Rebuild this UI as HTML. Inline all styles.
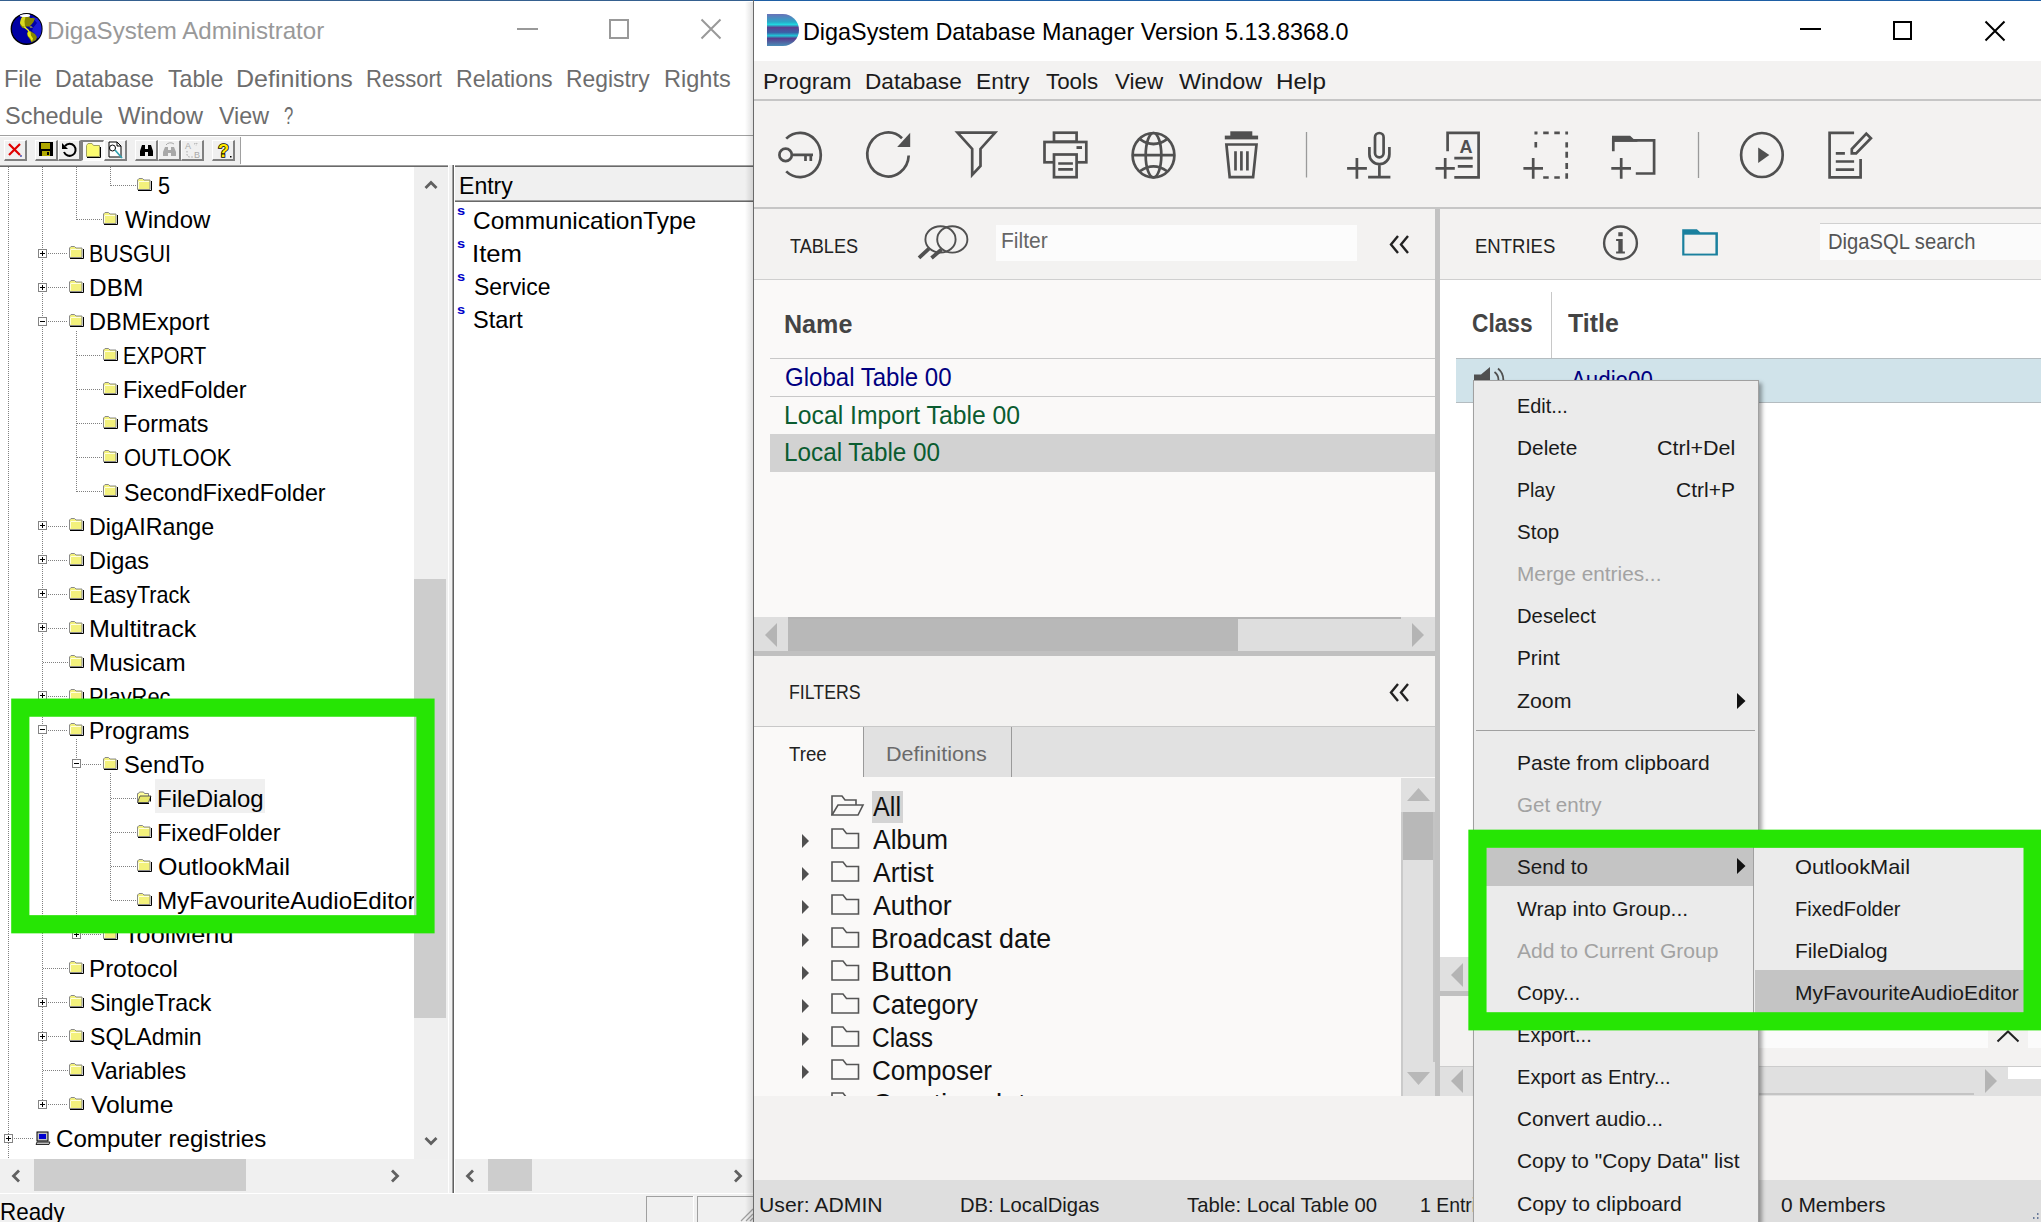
<!DOCTYPE html><html><head><meta charset="utf-8"><title>DigaSystem</title><style>
html,body{margin:0;padding:0;background:#fff;}
body{width:2041px;height:1222px;position:relative;overflow:hidden;font-family:"Liberation Sans",sans-serif;}
div,span.t,svg{position:absolute;}
span.t{white-space:nowrap;transform-origin:0 50%;}
.vd{width:1px;background-image:linear-gradient(to bottom,#808080 50%,transparent 50%);background-size:1px 2px;}
.hd{height:1px;background-image:linear-gradient(to right,#808080 50%,transparent 50%);background-size:2px 1px;}
</style></head><body>
<div style="left:0px;top:0px;width:754px;height:1222px;background:#fff;"></div>
<div style="left:0px;top:0px;width:754px;height:1px;background:#35608f;"></div>
<svg style="left:10px;top:12px;" width="34" height="34" viewBox="10 12 34 34"><defs><clipPath id="gc"><circle cx="26.6" cy="28.9" r="15"/></clipPath></defs><circle cx="26.6" cy="28.9" r="15.3" fill="#0000a4" stroke="#000" stroke-width="1.4"/><g clip-path="url(#gc)"><path d="M32 17l6 1 5 8v12l-4 2-4-6-3-3 1-3 4-5z" fill="#1a1ad8"/><path d="M22.500 16.600L29 16.200l1 1.800h3l2 .5-1.500 3.500-2 2.500-2 2h-3.500v2l-3.500-.5-2-2.500-.5-2.500 1-3.500z" fill="#868600"/><path d="M20 23l1-4.500 2-2.200 2.500.5-1 4.500.5 5-2.500.200-2-2.500z" fill="#d8d820"/><path d="M23.500 27l1.200-.8 4.800 4.300-1.200.8z" fill="#e8e820"/><path d="M28 31l3 .5 4 2.500 2 3-1 3-3 1.500-1.500 1-1.500-3-2.500-3.500-.5-2.500z" fill="#868600"/><path d="M27.500 33.500l.8-2.500 2.200.5.500 4 2 3-1 3-2-3.500-2-2z" fill="#e6e61c"/><path d="M29.500 26.500l2 0 1.500 1h-3z" fill="#e0e020"/><ellipse cx="25" cy="15.400" rx="5.200" ry="1.700" fill="#fff"/></g></svg>
<span class="t" style="left:47.1px;top:19.6px;font-size:23.6px;line-height:23.6px;color:#999;transform:scaleX(1.0213);">DigaSystem Administrator</span>
<div style="left:517px;top:28px;width:21px;height:2px;background:#999;"></div>
<div style="left:609px;top:19px;width:20px;height:20px;border:2px solid #999;box-sizing:border-box;"></div>
<svg style="left:700px;top:18px;" width="22" height="22" viewBox="0 0 22 22"><path d="M1.5 1.5l19 19M20.5 1.5l-19 19" stroke="#999" stroke-width="2" fill="none"/></svg>
<span class="t" style="left:4.1px;top:67.6px;font-size:23.6px;line-height:23.6px;color:#6d6d6d;transform:scaleX(0.9953);">File</span>
<span class="t" style="left:55.2px;top:67.6px;font-size:23.6px;line-height:23.6px;color:#6d6d6d;transform:scaleX(0.9778);">Database</span>
<span class="t" style="left:167.5px;top:67.6px;font-size:23.6px;line-height:23.6px;color:#6d6d6d;transform:scaleX(0.9820);">Table</span>
<span class="t" style="left:236.0px;top:67.6px;font-size:23.6px;line-height:23.6px;color:#6d6d6d;transform:scaleX(1.0605);">Definitions</span>
<span class="t" style="left:366.2px;top:67.6px;font-size:23.6px;line-height:23.6px;color:#6d6d6d;transform:scaleX(0.9332);">Ressort</span>
<span class="t" style="left:456.1px;top:67.6px;font-size:23.6px;line-height:23.6px;color:#6d6d6d;transform:scaleX(0.9823);">Relations</span>
<span class="t" style="left:566.2px;top:67.6px;font-size:23.6px;line-height:23.6px;color:#6d6d6d;transform:scaleX(0.9678);">Registry</span>
<span class="t" style="left:664.1px;top:67.6px;font-size:23.6px;line-height:23.6px;color:#6d6d6d;transform:scaleX(0.9970);">Rights</span>
<span class="t" style="left:4.9px;top:105.1px;font-size:23.6px;line-height:23.6px;color:#6d6d6d;transform:scaleX(0.9958);">Schedule</span>
<span class="t" style="left:117.9px;top:105.1px;font-size:23.6px;line-height:23.6px;color:#6d6d6d;transform:scaleX(1.0131);">Window</span>
<span class="t" style="left:218.9px;top:105.1px;font-size:23.6px;line-height:23.6px;color:#6d6d6d;transform:scaleX(0.9877);">View</span>
<span class="t" style="left:284.3px;top:105.1px;font-size:23.6px;line-height:23.6px;color:#6d6d6d;transform:scaleX(0.7062);">?</span>
<div style="left:0px;top:135px;width:754px;height:1px;background:#a0a0a0;"></div>
<div style="left:0px;top:136px;width:754px;height:29px;background:#fff;"></div>
<div style="left:0px;top:137px;width:241px;height:28px;background:#f0f0f0;"></div>
<div style="left:4px;top:140px;width:23px;height:21px;background:#f0f0f0;box-sizing:border-box;border-right:2px solid #808080;border-bottom:2px solid #808080;border-left:1px solid #fff;border-top:1px solid #fff;"></div>
<div style="left:35px;top:140px;width:23px;height:21px;background:#f0f0f0;box-sizing:border-box;border-right:2px solid #808080;border-bottom:2px solid #808080;border-left:1px solid #fff;border-top:1px solid #fff;"></div>
<div style="left:58px;top:140px;width:23px;height:21px;background:#f0f0f0;box-sizing:border-box;border-right:2px solid #808080;border-bottom:2px solid #808080;border-left:1px solid #fff;border-top:1px solid #fff;"></div>
<div style="left:81px;top:140px;width:23px;height:21px;background:#f8f8f8;box-sizing:border-box;border-left:2px solid #808080;border-top:2px solid #808080;border-right:1px solid #fff;border-bottom:1px solid #fff;"></div>
<div style="left:104px;top:140px;width:23px;height:21px;background:#f0f0f0;box-sizing:border-box;border-right:2px solid #808080;border-bottom:2px solid #808080;border-left:1px solid #fff;border-top:1px solid #fff;"></div>
<div style="left:135px;top:140px;width:23px;height:21px;background:#f0f0f0;box-sizing:border-box;border-right:2px solid #808080;border-bottom:2px solid #808080;border-left:1px solid #fff;border-top:1px solid #fff;"></div>
<div style="left:158px;top:140px;width:23px;height:21px;background:#f0f0f0;box-sizing:border-box;border-right:2px solid #808080;border-bottom:2px solid #808080;border-left:1px solid #fff;border-top:1px solid #fff;"></div>
<div style="left:181px;top:140px;width:23px;height:21px;background:#f0f0f0;box-sizing:border-box;border-right:2px solid #808080;border-bottom:2px solid #808080;border-left:1px solid #fff;border-top:1px solid #fff;"></div>
<div style="left:212px;top:140px;width:23px;height:21px;background:#f0f0f0;box-sizing:border-box;border-right:2px solid #808080;border-bottom:2px solid #808080;border-left:1px solid #fff;border-top:1px solid #fff;"></div>
<svg style="left:4px;top:139px;" width="23" height="22" viewBox="0 0 23 22"><path d="M5 5l11 11M16 5l-11 11" stroke="#e00000" stroke-width="2.2" fill="none"/><path d="M16.5 16.5l1 1" stroke="#00008b" stroke-width="1.5"/></svg>
<svg style="left:35px;top:139px;" width="23" height="22" viewBox="0 0 23 22"><rect x="4" y="3" width="14" height="14" fill="#000"/><rect x="6" y="4" width="9" height="6" fill="#b0a800"/><rect x="7" y="12" width="8" height="5" fill="#b0a800"/><rect x="12" y="13" width="2" height="3" fill="#000"/></svg>
<svg style="left:58px;top:139px;" width="23" height="22" viewBox="0 0 23 22"><path d="M7 7a6 6 0 1 1-1 6" stroke="#000" stroke-width="2" fill="none"/><path d="M4 4v6h6z" fill="#000"/></svg>
<svg style="left:81px;top:139px;" width="23" height="22" viewBox="0 0 23 22"><path d="M5.5 17.5V6.500l1.500-2h4l1.500 2h6v11z" fill="#fbfb70" stroke="#a0a060"/><path d="M6 18.500h13.500V8" stroke="#000" fill="none"/></svg>
<svg style="left:104px;top:139px;" width="23" height="22" viewBox="0 0 23 22"><path d="M5 3h8l4 4v11H5z" fill="#fff" stroke="#000"/><path d="M13 3v4h4" fill="none" stroke="#000"/><circle cx="8.5" cy="9" r="3" fill="none" stroke="#000"/><path d="M11 11l7 8" stroke="#30a0b0" stroke-width="1.6"/></svg>
<svg style="left:135px;top:139px;" width="23" height="22" viewBox="0 0 23 22"><path d="M5 17v-5l2-6h3v4h3V6h3l2 6v5h-5v-4h-3v4z" fill="#000"/></svg>
<svg style="left:158px;top:139px;" width="23" height="22" viewBox="0 0 23 22"><path d="M5 17v-4l2-5h3v3h3V8h3l2 5v4h-5v-3h-3v3z" fill="#a8a8a8"/><path d="M8 6a5 4 0 0 1 8-1" stroke="#a8a8a8" fill="none"/></svg>
<svg style="left:181px;top:139px;" width="23" height="22" viewBox="0 0 23 22"><text x="4" y="10" font-size="9" fill="#a8a8a8" font-family="Liberation Sans,sans-serif">A</text><text x="13" y="19" font-size="9" fill="#a8a8a8" font-family="Liberation Sans,sans-serif">B</text><path d="M6 12v3q0 3 3 3h3M13 5l3-1-1 3" stroke="#a8a8a8" stroke-dasharray="1.5 1.5" fill="none"/></svg>
<svg style="left:212px;top:139px;" width="23" height="22" viewBox="0 0 23 22"><text x="6" y="18" font-size="18" font-weight="bold" fill="#ffe800" stroke="#000" stroke-width="1.6" paint-order="stroke" font-family="Liberation Sans,sans-serif">?</text><rect x="18" y="17" width="1.5" height="1.5" fill="#000"/></svg>
<div style="left:240px;top:137px;width:1px;height:27px;background:#a0a0a0;"></div>
<div style="left:241px;top:137px;width:1px;height:27px;background:#fff;"></div>
<div style="left:0px;top:165px;width:448px;height:1px;background:#a0a0a0;"></div>
<div style="left:0px;top:166px;width:448px;height:1px;background:#696969;"></div>
<div style="left:414px;top:167px;width:34px;height:992px;background:#efefef;"></div>
<div style="left:414px;top:579px;width:32px;height:439px;background:#cdcdcd;"></div>
<svg style="left:424px;top:180px;" width="14" height="10" viewBox="0 0 14 10"><path d="M1.500 8L7 2.500 12.500 8" stroke="#606060" stroke-width="2.800" fill="none"/></svg>
<svg style="left:424px;top:1136px;" width="14" height="10" viewBox="0 0 14 10"><path d="M1.500 2L7 7.500 12.500 2" stroke="#606060" stroke-width="2.800" fill="none"/></svg>
<div style="left:0px;top:1159px;width:448px;height:34px;background:#f0f0f0;"></div>
<div style="left:34px;top:1159px;width:212px;height:32px;background:#cdcdcd;"></div>
<svg style="left:11px;top:1169px;" width="10" height="14" viewBox="0 0 10 14"><path d="M8 1.500L2.500 7 8 12.500" stroke="#606060" stroke-width="2.800" fill="none"/></svg>
<svg style="left:390px;top:1169px;" width="10" height="14" viewBox="0 0 10 14"><path d="M2 1.500L7.500 7 2 12.500" stroke="#606060" stroke-width="2.800" fill="none"/></svg>
<div style="left:448px;top:165px;width:1px;height:1028px;background:#fff;"></div>
<div style="left:449px;top:165px;width:3px;height:1028px;background:#f0f0f0;"></div>
<div style="left:452px;top:165px;width:1px;height:1028px;background:#a0a0a0;"></div>
<div style="left:453px;top:165px;width:1px;height:1028px;background:#606060;"></div>
<div style="left:454px;top:167px;width:1px;height:1026px;background:#fff;"></div>
<div style="left:455px;top:165px;width:299px;height:1px;background:#a0a0a0;"></div>
<div style="left:455px;top:166px;width:299px;height:1px;background:#696969;"></div>
<div style="left:455px;top:167px;width:299px;height:34px;background:#f0f0f0;"></div>
<div style="left:455px;top:200px;width:299px;height:1px;background:#a0a0a0;"></div>
<div style="left:455px;top:201px;width:299px;height:1px;background:#696969;"></div>
<span class="t" style="left:459.2px;top:175.1px;font-size:23.6px;line-height:23.6px;color:#000;transform:scaleX(0.9771);">Entry</span>
<span class="t" style="left:473.3px;top:209.6px;font-size:23.6px;line-height:23.6px;color:#000;transform:scaleX(1.0376);">CommunicationType</span>
<span class="t" style="left:457.0px;top:205.4px;font-size:12px;line-height:12px;color:#0000c8;transform:scaleX(1.2153);font-weight:bold;">s</span>
<span class="t" style="left:472.2px;top:242.6px;font-size:23.6px;line-height:23.6px;color:#000;transform:scaleX(1.0889);">Item</span>
<span class="t" style="left:457.0px;top:238.4px;font-size:12px;line-height:12px;color:#0000c8;transform:scaleX(1.2153);font-weight:bold;">s</span>
<span class="t" style="left:473.5px;top:275.6px;font-size:23.6px;line-height:23.6px;color:#000;transform:scaleX(0.9713);">Service</span>
<span class="t" style="left:457.0px;top:271.4px;font-size:12px;line-height:12px;color:#0000c8;transform:scaleX(1.2153);font-weight:bold;">s</span>
<span class="t" style="left:473.4px;top:308.6px;font-size:23.6px;line-height:23.6px;color:#000;transform:scaleX(0.9976);">Start</span>
<span class="t" style="left:457.0px;top:304.4px;font-size:12px;line-height:12px;color:#0000c8;transform:scaleX(1.2153);font-weight:bold;">s</span>
<div style="left:455px;top:1159px;width:299px;height:34px;background:#f0f0f0;"></div>
<div style="left:488px;top:1159px;width:44px;height:32px;background:#cdcdcd;"></div>
<svg style="left:465px;top:1169px;" width="10" height="14" viewBox="0 0 10 14"><path d="M8 1.500L2.500 7 8 12.500" stroke="#606060" stroke-width="2.800" fill="none"/></svg>
<svg style="left:733px;top:1169px;" width="10" height="14" viewBox="0 0 10 14"><path d="M2 1.500L7.500 7 2 12.500" stroke="#606060" stroke-width="2.800" fill="none"/></svg>
<div style="left:0px;top:1193px;width:754px;height:29px;background:#f0f0f0;"></div>
<div style="left:0px;top:1193px;width:754px;height:1px;background:#fff;"></div>
<span class="t" style="left:0.2px;top:1201.1px;font-size:23.6px;line-height:23.6px;color:#000;transform:scaleX(0.9500);">Ready</span>
<div style="left:646px;top:1196px;width:1px;height:26px;background:#a0a0a0;"></div>
<div style="left:647px;top:1196px;width:46px;height:1px;background:#a0a0a0;"></div>
<div style="left:693px;top:1196px;width:1px;height:26px;background:#fff;"></div>
<div style="left:697px;top:1196px;width:1px;height:26px;background:#a0a0a0;"></div>
<div style="left:698px;top:1196px;width:56px;height:1px;background:#a0a0a0;"></div>
<svg style="left:738px;top:1206px;" width="16" height="16" viewBox="0 0 16 16"><path d="M15 3L3 15M15 8L8 15M15 12l-3 3" stroke="#a0a0a0" stroke-width="1.2"/></svg>
<div style="left:0;top:167px;width:414px;height:992px;overflow:hidden">
<div class="vd" style="left:8px;top:0px;height:992px"></div>
<div class="vd" style="left:42px;top:0px;height:937.8499999999999px"></div>
<div class="vd" style="left:76px;top:0px;height:52.55000000000001px"></div>
<div class="vd" style="left:110px;top:0px;height:18.5px"></div>
<div class="vd" style="left:76px;top:163.7px;height:161.25px"></div>
<div class="vd" style="left:76px;top:572.3px;height:195.29999999999995px"></div>
<div class="vd" style="left:110px;top:606.3499999999999px;height:127.20000000000005px"></div>
<div class="hd" style="left:111px;top:18px;width:25px"></div>
<div class="hd" style="left:77px;top:52px;width:25px"></div>
<div class="hd" style="left:48px;top:86px;width:20px"></div>
<div class="hd" style="left:48px;top:120px;width:20px"></div>
<div class="hd" style="left:48px;top:154px;width:20px"></div>
<div class="hd" style="left:77px;top:188px;width:25px"></div>
<div class="hd" style="left:77px;top:222px;width:25px"></div>
<div class="hd" style="left:77px;top:256px;width:25px"></div>
<div class="hd" style="left:77px;top:290px;width:25px"></div>
<div class="hd" style="left:77px;top:324px;width:25px"></div>
<div class="hd" style="left:48px;top:359px;width:20px"></div>
<div class="hd" style="left:48px;top:393px;width:20px"></div>
<div class="hd" style="left:48px;top:427px;width:20px"></div>
<div class="hd" style="left:48px;top:461px;width:20px"></div>
<div class="hd" style="left:43px;top:495px;width:25px"></div>
<div class="hd" style="left:48px;top:529px;width:20px"></div>
<div class="hd" style="left:48px;top:563px;width:20px"></div>
<div class="hd" style="left:82px;top:597px;width:20px"></div>
<div class="hd" style="left:111px;top:631px;width:25px"></div>
<div class="hd" style="left:111px;top:665px;width:25px"></div>
<div class="hd" style="left:111px;top:699px;width:25px"></div>
<div class="hd" style="left:111px;top:733px;width:25px"></div>
<div class="hd" style="left:82px;top:767px;width:20px"></div>
<div class="hd" style="left:43px;top:801px;width:25px"></div>
<div class="hd" style="left:48px;top:835px;width:20px"></div>
<div class="hd" style="left:48px;top:869px;width:20px"></div>
<div class="hd" style="left:43px;top:903px;width:25px"></div>
<div class="hd" style="left:48px;top:937px;width:20px"></div>
<div class="hd" style="left:14px;top:971px;width:20px"></div>
<svg style="left:136px;top:10px;" width="17" height="15" viewBox="0 0 17 15"><path d="M1.5 12.5V3l1.5-1.5h3.5L8 3h6v9.5z" fill="#f3f17c" stroke="#8a8a8a"/><path d="M2 13.5h13.5V4" stroke="#000" fill="none"/><path d="M2.5 4.5v7M3 4.5h10" stroke="#ffffe0" fill="none"/></svg>
<span class="t" style="left:157.8px;top:8.0px;font-size:23.6px;line-height:23.6px;color:#000;transform:scaleX(0.9188);">5</span>
<svg style="left:102px;top:44px;" width="17" height="15" viewBox="0 0 17 15"><path d="M1.5 12.5V3l1.5-1.5h3.5L8 3h6v9.5z" fill="#f3f17c" stroke="#8a8a8a"/><path d="M2 13.5h13.5V4" stroke="#000" fill="none"/><path d="M2.5 4.5v7M3 4.5h10" stroke="#ffffe0" fill="none"/></svg>
<span class="t" style="left:124.6px;top:42.1px;font-size:23.6px;line-height:23.6px;color:#000;transform:scaleX(1.0167);">Window</span>
<svg style="left:68px;top:78px;" width="17" height="15" viewBox="0 0 17 15"><path d="M1.5 12.5V3l1.5-1.5h3.5L8 3h6v9.5z" fill="#f3f17c" stroke="#8a8a8a"/><path d="M2 13.5h13.5V4" stroke="#000" fill="none"/><path d="M2.5 4.5v7M3 4.5h10" stroke="#ffffe0" fill="none"/></svg>
<svg style="left:38px;top:82px;" width="9" height="9" viewBox="0 0 9 9"><rect x="0.5" y="0.5" width="8" height="8" fill="#fff" stroke="#848484"/><path d="M2 4.5h5" stroke="#000"/><path d="M4.5 2v5" stroke="#000"/></svg>
<span class="t" style="left:89.0px;top:76.1px;font-size:23.6px;line-height:23.6px;color:#000;transform:scaleX(0.9065);">BUSGUI</span>
<svg style="left:68px;top:112px;" width="17" height="15" viewBox="0 0 17 15"><path d="M1.5 12.5V3l1.5-1.5h3.5L8 3h6v9.5z" fill="#f3f17c" stroke="#8a8a8a"/><path d="M2 13.5h13.5V4" stroke="#000" fill="none"/><path d="M2.5 4.5v7M3 4.5h10" stroke="#ffffe0" fill="none"/></svg>
<svg style="left:38px;top:116px;" width="9" height="9" viewBox="0 0 9 9"><rect x="0.5" y="0.5" width="8" height="8" fill="#fff" stroke="#848484"/><path d="M2 4.5h5" stroke="#000"/><path d="M4.5 2v5" stroke="#000"/></svg>
<span class="t" style="left:88.7px;top:110.2px;font-size:23.6px;line-height:23.6px;color:#000;transform:scaleX(1.0346);">DBM</span>
<svg style="left:68px;top:146px;" width="17" height="15" viewBox="0 0 17 15"><path d="M1.5 12.5V3l1.5-1.5h3.5L8 3h6v9.5z" fill="#f3f17c" stroke="#8a8a8a"/><path d="M2 13.5h13.5V4" stroke="#000" fill="none"/><path d="M2.5 4.5v7M3 4.5h10" stroke="#ffffe0" fill="none"/></svg>
<svg style="left:38px;top:150px;" width="9" height="9" viewBox="0 0 9 9"><rect x="0.5" y="0.5" width="8" height="8" fill="#fff" stroke="#848484"/><path d="M2 4.5h5" stroke="#000"/></svg>
<span class="t" style="left:88.8px;top:144.2px;font-size:23.6px;line-height:23.6px;color:#000;transform:scaleX(0.9976);">DBMExport</span>
<svg style="left:102px;top:180px;" width="17" height="15" viewBox="0 0 17 15"><path d="M1.5 12.5V3l1.5-1.5h3.5L8 3h6v9.5z" fill="#f3f17c" stroke="#8a8a8a"/><path d="M2 13.5h13.5V4" stroke="#000" fill="none"/><path d="M2.5 4.5v7M3 4.5h10" stroke="#ffffe0" fill="none"/></svg>
<span class="t" style="left:123.1px;top:178.3px;font-size:23.6px;line-height:23.6px;color:#000;transform:scaleX(0.8623);">EXPORT</span>
<svg style="left:102px;top:214px;" width="17" height="15" viewBox="0 0 17 15"><path d="M1.5 12.5V3l1.5-1.5h3.5L8 3h6v9.5z" fill="#f3f17c" stroke="#8a8a8a"/><path d="M2 13.5h13.5V4" stroke="#000" fill="none"/><path d="M2.5 4.5v7M3 4.5h10" stroke="#ffffe0" fill="none"/></svg>
<span class="t" style="left:122.8px;top:212.3px;font-size:23.6px;line-height:23.6px;color:#000;transform:scaleX(0.9913);">FixedFolder</span>
<svg style="left:102px;top:248px;" width="17" height="15" viewBox="0 0 17 15"><path d="M1.5 12.5V3l1.5-1.5h3.5L8 3h6v9.5z" fill="#f3f17c" stroke="#8a8a8a"/><path d="M2 13.5h13.5V4" stroke="#000" fill="none"/><path d="M2.5 4.5v7M3 4.5h10" stroke="#ffffe0" fill="none"/></svg>
<span class="t" style="left:122.8px;top:246.4px;font-size:23.6px;line-height:23.6px;color:#000;transform:scaleX(0.9883);">Formats</span>
<svg style="left:102px;top:282px;" width="17" height="15" viewBox="0 0 17 15"><path d="M1.5 12.5V3l1.5-1.5h3.5L8 3h6v9.5z" fill="#f3f17c" stroke="#8a8a8a"/><path d="M2 13.5h13.5V4" stroke="#000" fill="none"/><path d="M2.5 4.5v7M3 4.5h10" stroke="#ffffe0" fill="none"/></svg>
<span class="t" style="left:123.7px;top:280.4px;font-size:23.6px;line-height:23.6px;color:#000;transform:scaleX(0.9316);">OUTLOOK</span>
<svg style="left:102px;top:316px;" width="17" height="15" viewBox="0 0 17 15"><path d="M1.5 12.5V3l1.5-1.5h3.5L8 3h6v9.5z" fill="#f3f17c" stroke="#8a8a8a"/><path d="M2 13.5h13.5V4" stroke="#000" fill="none"/><path d="M2.5 4.5v7M3 4.5h10" stroke="#ffffe0" fill="none"/></svg>
<span class="t" style="left:123.7px;top:314.5px;font-size:23.6px;line-height:23.6px;color:#000;transform:scaleX(0.9852);">SecondFixedFolder</span>
<svg style="left:68px;top:350px;" width="17" height="15" viewBox="0 0 17 15"><path d="M1.5 12.5V3l1.5-1.5h3.5L8 3h6v9.5z" fill="#f3f17c" stroke="#8a8a8a"/><path d="M2 13.5h13.5V4" stroke="#000" fill="none"/><path d="M2.5 4.5v7M3 4.5h10" stroke="#ffffe0" fill="none"/></svg>
<svg style="left:38px;top:354px;" width="9" height="9" viewBox="0 0 9 9"><rect x="0.5" y="0.5" width="8" height="8" fill="#fff" stroke="#848484"/><path d="M2 4.5h5" stroke="#000"/><path d="M4.5 2v5" stroke="#000"/></svg>
<span class="t" style="left:88.8px;top:348.5px;font-size:23.6px;line-height:23.6px;color:#000;transform:scaleX(0.9833);">DigAIRange</span>
<svg style="left:68px;top:385px;" width="17" height="15" viewBox="0 0 17 15"><path d="M1.5 12.5V3l1.5-1.5h3.5L8 3h6v9.5z" fill="#f3f17c" stroke="#8a8a8a"/><path d="M2 13.5h13.5V4" stroke="#000" fill="none"/><path d="M2.5 4.5v7M3 4.5h10" stroke="#ffffe0" fill="none"/></svg>
<svg style="left:38px;top:388px;" width="9" height="9" viewBox="0 0 9 9"><rect x="0.5" y="0.5" width="8" height="8" fill="#fff" stroke="#848484"/><path d="M2 4.5h5" stroke="#000"/><path d="M4.5 2v5" stroke="#000"/></svg>
<span class="t" style="left:88.8px;top:382.6px;font-size:23.6px;line-height:23.6px;color:#000;transform:scaleX(0.9951);">Digas</span>
<svg style="left:68px;top:419px;" width="17" height="15" viewBox="0 0 17 15"><path d="M1.5 12.5V3l1.5-1.5h3.5L8 3h6v9.5z" fill="#f3f17c" stroke="#8a8a8a"/><path d="M2 13.5h13.5V4" stroke="#000" fill="none"/><path d="M2.5 4.5v7M3 4.5h10" stroke="#ffffe0" fill="none"/></svg>
<svg style="left:38px;top:422px;" width="9" height="9" viewBox="0 0 9 9"><rect x="0.5" y="0.5" width="8" height="8" fill="#fff" stroke="#848484"/><path d="M2 4.5h5" stroke="#000"/><path d="M4.5 2v5" stroke="#000"/></svg>
<span class="t" style="left:89.0px;top:416.6px;font-size:23.6px;line-height:23.6px;color:#000;transform:scaleX(0.9137);">EasyTrack</span>
<svg style="left:68px;top:453px;" width="17" height="15" viewBox="0 0 17 15"><path d="M1.5 12.5V3l1.5-1.5h3.5L8 3h6v9.5z" fill="#f3f17c" stroke="#8a8a8a"/><path d="M2 13.5h13.5V4" stroke="#000" fill="none"/><path d="M2.5 4.5v7M3 4.5h10" stroke="#ffffe0" fill="none"/></svg>
<svg style="left:38px;top:456px;" width="9" height="9" viewBox="0 0 9 9"><rect x="0.5" y="0.5" width="8" height="8" fill="#fff" stroke="#848484"/><path d="M2 4.5h5" stroke="#000"/><path d="M4.5 2v5" stroke="#000"/></svg>
<span class="t" style="left:88.7px;top:450.7px;font-size:23.6px;line-height:23.6px;color:#000;transform:scaleX(1.0623);">Multitrack</span>
<svg style="left:68px;top:487px;" width="17" height="15" viewBox="0 0 17 15"><path d="M1.5 12.5V3l1.5-1.5h3.5L8 3h6v9.5z" fill="#f3f17c" stroke="#8a8a8a"/><path d="M2 13.5h13.5V4" stroke="#000" fill="none"/><path d="M2.5 4.5v7M3 4.5h10" stroke="#ffffe0" fill="none"/></svg>
<span class="t" style="left:88.8px;top:484.7px;font-size:23.6px;line-height:23.6px;color:#000;transform:scaleX(1.0242);">Musicam</span>
<svg style="left:68px;top:521px;" width="17" height="15" viewBox="0 0 17 15"><path d="M1.5 12.5V3l1.5-1.5h3.5L8 3h6v9.5z" fill="#f3f17c" stroke="#8a8a8a"/><path d="M2 13.5h13.5V4" stroke="#000" fill="none"/><path d="M2.5 4.5v7M3 4.5h10" stroke="#ffffe0" fill="none"/></svg>
<svg style="left:38px;top:524px;" width="9" height="9" viewBox="0 0 9 9"><rect x="0.5" y="0.5" width="8" height="8" fill="#fff" stroke="#848484"/><path d="M2 4.5h5" stroke="#000"/><path d="M4.5 2v5" stroke="#000"/></svg>
<span class="t" style="left:88.9px;top:518.8px;font-size:23.6px;line-height:23.6px;color:#000;transform:scaleX(0.9282);">PlayRec</span>
<svg style="left:68px;top:555px;" width="17" height="15" viewBox="0 0 17 15"><path d="M1.5 12.5V3l1.5-1.5h3.5L8 3h6v9.5z" fill="#f3f17c" stroke="#8a8a8a"/><path d="M2 13.5h13.5V4" stroke="#000" fill="none"/><path d="M2.5 4.5v7M3 4.5h10" stroke="#ffffe0" fill="none"/></svg>
<svg style="left:38px;top:558px;" width="9" height="9" viewBox="0 0 9 9"><rect x="0.5" y="0.5" width="8" height="8" fill="#fff" stroke="#848484"/><path d="M2 4.5h5" stroke="#000"/></svg>
<span class="t" style="left:88.8px;top:552.8px;font-size:23.6px;line-height:23.6px;color:#000;transform:scaleX(0.9820);">Programs</span>
<svg style="left:102px;top:589px;" width="17" height="15" viewBox="0 0 17 15"><path d="M1.5 12.5V3l1.5-1.5h3.5L8 3h6v9.5z" fill="#f3f17c" stroke="#8a8a8a"/><path d="M2 13.5h13.5V4" stroke="#000" fill="none"/><path d="M2.5 4.5v7M3 4.5h10" stroke="#ffffe0" fill="none"/></svg>
<svg style="left:72px;top:592px;" width="9" height="9" viewBox="0 0 9 9"><rect x="0.5" y="0.5" width="8" height="8" fill="#fff" stroke="#848484"/><path d="M2 4.5h5" stroke="#000"/></svg>
<span class="t" style="left:123.6px;top:586.9px;font-size:23.6px;line-height:23.6px;color:#000;transform:scaleX(1.0039);">SendTo</span>
<div style="left:155px;top:611.9px;width:110px;height:34px;background:#f0f0f0"></div>
<svg style="left:136px;top:623px;" width="17" height="15" viewBox="0 0 17 15"><path d="M1.5 12.5V3.5h1l1-1.5h4l1 1.5h4v2.5" fill="#ffff9c" stroke="#848484"/><path d="M1.5 12.5l2.5-6.5h11l-2.5 6.5z" fill="#e8e86a" stroke="#555"/><path d="M2 13.5h11M14.5 6.5v5" stroke="#000" fill="none"/></svg>
<span class="t" style="left:156.8px;top:620.9px;font-size:23.6px;line-height:23.6px;color:#000;transform:scaleX(1.0168);">FileDialog</span>
<svg style="left:136px;top:657px;" width="17" height="15" viewBox="0 0 17 15"><path d="M1.5 12.5V3l1.5-1.5h3.5L8 3h6v9.5z" fill="#f3f17c" stroke="#8a8a8a"/><path d="M2 13.5h13.5V4" stroke="#000" fill="none"/><path d="M2.5 4.5v7M3 4.5h10" stroke="#ffffe0" fill="none"/></svg>
<span class="t" style="left:156.8px;top:655.0px;font-size:23.6px;line-height:23.6px;color:#000;transform:scaleX(0.9913);">FixedFolder</span>
<svg style="left:136px;top:691px;" width="17" height="15" viewBox="0 0 17 15"><path d="M1.5 12.5V3l1.5-1.5h3.5L8 3h6v9.5z" fill="#f3f17c" stroke="#8a8a8a"/><path d="M2 13.5h13.5V4" stroke="#000" fill="none"/><path d="M2.5 4.5v7M3 4.5h10" stroke="#ffffe0" fill="none"/></svg>
<span class="t" style="left:157.6px;top:689.0px;font-size:23.6px;line-height:23.6px;color:#000;transform:scaleX(1.0597);">OutlookMail</span>
<svg style="left:136px;top:725px;" width="17" height="15" viewBox="0 0 17 15"><path d="M1.5 12.5V3l1.5-1.5h3.5L8 3h6v9.5z" fill="#f3f17c" stroke="#8a8a8a"/><path d="M2 13.5h13.5V4" stroke="#000" fill="none"/><path d="M2.5 4.5v7M3 4.5h10" stroke="#ffffe0" fill="none"/></svg>
<span class="t" style="left:156.8px;top:723.1px;font-size:23.6px;line-height:23.6px;color:#000;transform:scaleX(1.0265);">MyFavouriteAudioEditor</span>
<svg style="left:102px;top:759px;" width="17" height="15" viewBox="0 0 17 15"><path d="M1.5 12.5V3l1.5-1.5h3.5L8 3h6v9.5z" fill="#f3f17c" stroke="#8a8a8a"/><path d="M2 13.5h13.5V4" stroke="#000" fill="none"/><path d="M2.5 4.5v7M3 4.5h10" stroke="#ffffe0" fill="none"/></svg>
<svg style="left:72px;top:763px;" width="9" height="9" viewBox="0 0 9 9"><rect x="0.5" y="0.5" width="8" height="8" fill="#fff" stroke="#848484"/><path d="M2 4.5h5" stroke="#000"/><path d="M4.5 2v5" stroke="#000"/></svg>
<span class="t" style="left:124.2px;top:757.1px;font-size:23.6px;line-height:23.6px;color:#000;transform:scaleX(1.0698);">ToolMenu</span>
<svg style="left:68px;top:793px;" width="17" height="15" viewBox="0 0 17 15"><path d="M1.5 12.5V3l1.5-1.5h3.5L8 3h6v9.5z" fill="#f3f17c" stroke="#8a8a8a"/><path d="M2 13.5h13.5V4" stroke="#000" fill="none"/><path d="M2.5 4.5v7M3 4.5h10" stroke="#ffffe0" fill="none"/></svg>
<span class="t" style="left:88.8px;top:791.2px;font-size:23.6px;line-height:23.6px;color:#000;transform:scaleX(1.0268);">Protocol</span>
<svg style="left:68px;top:827px;" width="17" height="15" viewBox="0 0 17 15"><path d="M1.5 12.5V3l1.5-1.5h3.5L8 3h6v9.5z" fill="#f3f17c" stroke="#8a8a8a"/><path d="M2 13.5h13.5V4" stroke="#000" fill="none"/><path d="M2.5 4.5v7M3 4.5h10" stroke="#ffffe0" fill="none"/></svg>
<svg style="left:38px;top:831px;" width="9" height="9" viewBox="0 0 9 9"><rect x="0.5" y="0.5" width="8" height="8" fill="#fff" stroke="#848484"/><path d="M2 4.5h5" stroke="#000"/><path d="M4.5 2v5" stroke="#000"/></svg>
<span class="t" style="left:89.7px;top:825.2px;font-size:23.6px;line-height:23.6px;color:#000;transform:scaleX(0.9803);">SingleTrack</span>
<svg style="left:68px;top:861px;" width="17" height="15" viewBox="0 0 17 15"><path d="M1.5 12.5V3l1.5-1.5h3.5L8 3h6v9.5z" fill="#f3f17c" stroke="#8a8a8a"/><path d="M2 13.5h13.5V4" stroke="#000" fill="none"/><path d="M2.5 4.5v7M3 4.5h10" stroke="#ffffe0" fill="none"/></svg>
<svg style="left:38px;top:865px;" width="9" height="9" viewBox="0 0 9 9"><rect x="0.5" y="0.5" width="8" height="8" fill="#fff" stroke="#848484"/><path d="M2 4.5h5" stroke="#000"/><path d="M4.5 2v5" stroke="#000"/></svg>
<span class="t" style="left:89.7px;top:859.3px;font-size:23.6px;line-height:23.6px;color:#000;transform:scaleX(0.9791);">SQLAdmin</span>
<svg style="left:68px;top:895px;" width="17" height="15" viewBox="0 0 17 15"><path d="M1.5 12.5V3l1.5-1.5h3.5L8 3h6v9.5z" fill="#f3f17c" stroke="#8a8a8a"/><path d="M2 13.5h13.5V4" stroke="#000" fill="none"/><path d="M2.5 4.5v7M3 4.5h10" stroke="#ffffe0" fill="none"/></svg>
<span class="t" style="left:90.6px;top:893.3px;font-size:23.6px;line-height:23.6px;color:#000;transform:scaleX(0.9854);">Variables</span>
<svg style="left:68px;top:929px;" width="17" height="15" viewBox="0 0 17 15"><path d="M1.5 12.5V3l1.5-1.5h3.5L8 3h6v9.5z" fill="#f3f17c" stroke="#8a8a8a"/><path d="M2 13.5h13.5V4" stroke="#000" fill="none"/><path d="M2.5 4.5v7M3 4.5h10" stroke="#ffffe0" fill="none"/></svg>
<svg style="left:38px;top:933px;" width="9" height="9" viewBox="0 0 9 9"><rect x="0.5" y="0.5" width="8" height="8" fill="#fff" stroke="#848484"/><path d="M2 4.5h5" stroke="#000"/><path d="M4.5 2v5" stroke="#000"/></svg>
<span class="t" style="left:90.6px;top:927.4px;font-size:23.6px;line-height:23.6px;color:#000;transform:scaleX(1.0471);">Volume</span>
<svg style="left:35px;top:964px;" width="16" height="16" viewBox="0 0 16 16"><rect x="2" y="1" width="11" height="9" fill="#c0c0c0" stroke="#000"/><rect x="4" y="3" width="7" height="5" fill="#0000d0"/><path d="M1 13.5h13l1-2.5H2z" fill="#c0c0c0" stroke="#000" stroke-width=".8"/></svg>
<svg style="left:4px;top:967px;" width="9" height="9" viewBox="0 0 9 9"><rect x="0.5" y="0.5" width="8" height="8" fill="#fff" stroke="#848484"/><path d="M2 4.5h5" stroke="#000"/><path d="M4.5 2v5" stroke="#000"/></svg>
<span class="t" style="left:55.5px;top:961.4px;font-size:23.6px;line-height:23.6px;color:#000;transform:scaleX(1.0216);">Computer registries</span>
</div>
<div style="left:745px;top:2px;width:8px;height:1220px;background:linear-gradient(to right,rgba(0,0,0,0),rgba(0,0,0,.12))"></div>
<div style="left:753px;top:0px;width:1px;height:1222px;background:#6a6a6a;"></div>
<div style="left:754px;top:0px;width:1287px;height:1222px;background:#f3f2f1;"></div>
<div style="left:754px;top:0px;width:1287px;height:1px;background:#1e5ea4;"></div>
<div style="left:754px;top:1px;width:1287px;height:60px;background:#fff;"></div>
<svg style="left:767px;top:14px;" width="32" height="32" viewBox="0 0 32 32"><defs><linearGradient id="lg" x1="0" y1="0" x2="0" y2="1"><stop offset="0" stop-color="#6a72b8"/><stop offset=".25" stop-color="#2aa8c8"/><stop offset=".33" stop-color="#20d8e0"/><stop offset=".42" stop-color="#5a4090"/><stop offset=".58" stop-color="#3a62a8"/><stop offset=".68" stop-color="#20c8d8"/><stop offset=".76" stop-color="#583c8c"/><stop offset="1" stop-color="#4a8cb8"/></linearGradient></defs><path d="M0 0h16a16 16 0 0 1 0 32H0z" fill="url(#lg)"/></svg>
<span class="t" style="left:803.1px;top:20.5px;font-size:23.4px;line-height:23.4px;color:#000;transform:scaleX(0.9989);">DigaSystem Database Manager Version 5.13.8368.0</span>
<div style="left:1800px;top:28px;width:21px;height:2px;background:#000;"></div>
<div style="left:1893px;top:21px;width:19px;height:19px;border:2px solid #000;box-sizing:border-box;"></div>
<svg style="left:1984px;top:20px;" width="22" height="22" viewBox="0 0 22 22"><path d="M1.5 1.5l19 19M20.5 1.5l-19 19" stroke="#000" stroke-width="2" fill="none"/></svg>
<span class="t" style="left:762.9px;top:70.9px;font-size:21.8px;line-height:21.8px;color:#1a1a1a;transform:scaleX(1.0604);">Program</span>
<span class="t" style="left:865.2px;top:70.9px;font-size:21.8px;line-height:21.8px;color:#1a1a1a;transform:scaleX(1.0365);">Database</span>
<span class="t" style="left:976.2px;top:70.9px;font-size:21.8px;line-height:21.8px;color:#1a1a1a;transform:scaleX(1.0476);">Entry</span>
<span class="t" style="left:1045.6px;top:70.9px;font-size:21.8px;line-height:21.8px;color:#1a1a1a;transform:scaleX(1.0261);">Tools</span>
<span class="t" style="left:1114.9px;top:70.9px;font-size:21.8px;line-height:21.8px;color:#1a1a1a;transform:scaleX(1.0265);">View</span>
<span class="t" style="left:1178.9px;top:70.9px;font-size:21.8px;line-height:21.8px;color:#1a1a1a;transform:scaleX(1.0710);">Window</span>
<span class="t" style="left:1276.1px;top:70.9px;font-size:21.8px;line-height:21.8px;color:#1a1a1a;transform:scaleX(1.1142);">Help</span>
<div style="left:754px;top:99px;width:1287px;height:2px;background:#c6c6c6;"></div>
<svg style="left:754px;top:100px" width="1287" height="108" viewBox="754 100 1287 108"><path d="M786.2 138.6A20.7 22.1 0 1 1 786.2 171.4" fill="none" stroke="#505050" stroke-width="2.7"/><circle cx="785.6" cy="154.9" r="6.2" fill="none" stroke="#505050" stroke-width="2.7"/><path d="M792.5 154.9H813M805.5 154.5v6.5M810.8 154.5v6.5" fill="none" stroke="#505050" stroke-width="2.7"/><path d="M908.7 155.5A20.7 22 0 1 1 902 138.2" fill="none" stroke="#505050" stroke-width="2.7"/><path d="M910.2 132.8v14.2h-13z" fill="#505050"/><path d="M957.5 132.7h37.6l-14.6 16.2v17l-8.3 9v-26z" fill="none" stroke="#505050" stroke-width="2.7" stroke-linejoin="miter"/><rect x="1054" y="132.7" width="22.6" height="9" fill="none" stroke="#505050" stroke-width="2.7"/><rect x="1044.5" y="142" width="41.8" height="20.3" fill="none" stroke="#505050" stroke-width="2.7"/><rect x="1054" y="154.5" width="22.6" height="22.7" fill="#f3f2f1" stroke="#505050" stroke-width="2.7"/><rect x="1076.5" y="146.1" width="5.5" height="2.9" fill="#505050"/><path d="M1058.2 163.5h14.7M1058.2 169.3h14.7" fill="none" stroke="#505050" stroke-width="2.7" stroke-width="2.5"/><ellipse cx="1153.5" cy="155.2" rx="20.9" ry="22.2" fill="none" stroke="#505050" stroke-width="2.7"/><ellipse cx="1153.5" cy="155.2" rx="7.8" ry="22.2" fill="none" stroke="#505050" stroke-width="2.7" stroke-width="2.3"/><path d="M1132.5 155.2h42M1140.2 139.4Q1153.5 148.6 1166.8 139.4M1140.2 171Q1153.5 161.8 1166.8 171" fill="none" stroke="#505050" stroke-width="2.7" stroke-width="2.5"/><rect x="1230.3" y="131.3" width="22" height="5" fill="#505050"/><rect x="1224.8" y="135.6" width="33.3" height="3.8" fill="#505050"/><path d="M1226.4 144.5h30.1l-3.4 32.6h-23.4z" fill="none" stroke="#505050" stroke-width="2.7" stroke-width="2.9"/><path d="M1235.5 151.2v19.4M1241.4 151.2v19.4M1247.4 151.2v19.4" fill="none" stroke="#505050" stroke-width="2.7" stroke-width="3"/><path d="M1306.5 132v45.6M1698.5 132v46" stroke="#9a9a9a" stroke-width="1.3"/><path d="M1347.1 168.4h19.8M1356.9 158.1v20.7" fill="none" stroke="#505050" stroke-width="2.7"/><rect x="1375" y="133" width="8.6" height="24.3" rx="4.3" fill="none" stroke="#505050" stroke-width="2.7"/><path d="M1369.4 147v7.2a10 10 0 0 0 20 0V147M1379.4 164.5v12M1368.1 177.1h22.3" fill="none" stroke="#505050" stroke-width="2.7"/><path d="M1435.5 168.4h19.3M1445.2 158.1v20.7" fill="none" stroke="#505050" stroke-width="2.7"/><path d="M1447.6 151.2V132.9h31v44.5h-24.3" fill="none" stroke="#505050" stroke-width="2.7"/><path d="M1454.3 158.1h18.4M1457.8 166.3h14.9" fill="none" stroke="#505050" stroke-width="2.7"/><text x="1459.6" y="152.6" font-size="18" font-weight="bold" fill="#505050" font-family="Liberation Sans,sans-serif">A</text><path d="M1523.4 168.4h19.6M1533.2 158.1v20.7" fill="none" stroke="#505050" stroke-width="2.7"/><path d="M1534.5 132.9h3M1543.2 132.9h5.5M1554.3 132.9h5.5M1565.3 132.9h2.7M1566.7 131.6v3M1566.7 142.3v5.1M1566.7 151.7v6M1566.7 162.9v6M1566.7 173.2v5.6M1535.8 131.6v3M1535.8 142v5.4M1543.2 177.5h5.5M1554.3 177.5h5.5M1565.3 177.5h2.7" fill="none" stroke="#505050" stroke-width="2.7"/><path d="M1611.3 168.4h19.7M1621.2 158.1v20.7" fill="none" stroke="#505050" stroke-width="2.7"/><path d="M1613.3 151.2V137.5M1613 140.4h41.1v33.1h-18.3" fill="none" stroke="#505050" stroke-width="2.7"/><path d="M1612 135.8h18.1l4.3 3.9h3v2h-25.4z" fill="#505050"/><ellipse cx="1761.9" cy="155" rx="20.8" ry="22" fill="none" stroke="#505050" stroke-width="2.7"/><path d="M1758.2 147.5v15.4l11.1-7.9z" fill="#505050"/><path d="M1854.1 132.9H1829.6V177.4H1860.6V159" fill="none" stroke="#505050" stroke-width="2.7" stroke-width="2.8"/><path d="M1835.8 153.4h9.1M1835.8 161.5h18.3M1835.8 169.6h18.3" fill="none" stroke="#505050" stroke-width="2.7"/><path d="M1866.3 133.6l4.6 4.6-14.8 15.2h-4.3v-4.4z" fill="none" stroke="#505050" stroke-width="2.7" stroke-width="2.5"/></svg>
<div style="left:754px;top:207px;width:1287px;height:2px;background:#c6c6c6;"></div>
<span class="t" style="left:790.2px;top:235.8px;font-size:20.6px;line-height:20.6px;color:#222;transform:scaleX(0.8789);">TABLES</span>
<svg style="left:914px;top:222px;" width="56" height="40" viewBox="0 0 56 40"><ellipse cx="26.5" cy="17.4" rx="15.1" ry="13.2" fill="none" stroke="#505050" stroke-width="1.9"/><ellipse cx="38.3" cy="17.4" rx="15.1" ry="13.2" fill="none" stroke="#505050" stroke-width="1.9"/><path d="M15 26.7L5 35.8M27.5 27.5L17.5 36" stroke="#505050" stroke-width="3.8"/></svg>
<div style="left:996px;top:225px;width:361px;height:36px;background:#fcfcfc;"></div>
<span class="t" style="left:1001.3px;top:231.4px;font-size:21.5px;line-height:21.5px;color:#666;transform:scaleX(0.9783);">Filter</span>
<svg style="left:1389px;top:235px;" width="21" height="19" viewBox="0 0 21 19"><path d="M9 1L2 9.5 9 18M19 1L12 9.5 19 18" fill="none" stroke="#222" stroke-width="2.4"/></svg>
<div style="left:754px;top:279px;width:682px;height:1px;background:#cfcfcf;"></div>
<div style="left:754px;top:280px;width:682px;height:337px;background:#faf9f8;"></div>
<span class="t" style="left:784.4px;top:311.6px;font-size:25px;line-height:25px;color:#444;transform:scaleX(1.0038);font-weight:bold;">Name</span>
<div style="left:770px;top:358px;width:665px;height:1px;background:#c8c8c8;"></div>
<div style="left:770px;top:396px;width:665px;height:1px;background:#c8c8c8;"></div>
<div style="left:770px;top:434px;width:665px;height:38px;background:#d2d2d2;"></div>
<span class="t" style="left:784.8px;top:365.0px;font-size:25px;line-height:25px;color:#000080;transform:scaleX(0.9613);">Global Table 00</span>
<span class="t" style="left:784.0px;top:402.8px;font-size:25px;line-height:25px;color:#0a5c30;transform:scaleX(0.9897);">Local Import Table 00</span>
<span class="t" style="left:784.1px;top:440.4px;font-size:25px;line-height:25px;color:#0a5c30;transform:scaleX(0.9710);">Local Table 00</span>
<div style="left:754px;top:617px;width:682px;height:34px;background:#dedede;"></div>
<div style="left:754px;top:651px;width:682px;height:5px;background:#c0c0c0;"></div>
<div style="left:788px;top:617px;width:613px;height:2px;background:#b4b4b4;"></div>
<div style="left:788px;top:619px;width:450px;height:32px;background:#b8b8b8;"></div>
<svg style="left:765px;top:623px;" width="12" height="24" viewBox="0 0 12 24"><path d="M12 0v24L0 12z" fill="#b4b4b4"/></svg>
<svg style="left:1412px;top:623px;" width="12" height="24" viewBox="0 0 12 24"><path d="M0 0v24l12-12z" fill="#b4b4b4"/></svg>
<span class="t" style="left:789.2px;top:682.2px;font-size:20.6px;line-height:20.6px;color:#222;transform:scaleX(0.8616);">FILTERS</span>
<svg style="left:1389px;top:683px;" width="21" height="19" viewBox="0 0 21 19"><path d="M9 1L2 9.5 9 18M19 1L12 9.5 19 18" fill="none" stroke="#222" stroke-width="2.4"/></svg>
<div style="left:754px;top:726px;width:682px;height:1px;background:#c8c8c8;"></div>
<div style="left:754px;top:727px;width:682px;height:50px;background:#e1e1e1;"></div>
<div style="left:754px;top:727px;width:109px;height:50px;background:#faf9f8;"></div>
<div style="left:863px;top:727px;width:1px;height:50px;background:#9a9a9a;"></div>
<div style="left:1011px;top:727px;width:1px;height:50px;background:#9a9a9a;"></div>
<span class="t" style="left:789.3px;top:743.6px;font-size:20.8px;line-height:20.8px;color:#222;transform:scaleX(0.8978);">Tree</span>
<span class="t" style="left:886.3px;top:743.6px;font-size:20.8px;line-height:20.8px;color:#6a6a6a;transform:scaleX(1.0375);">Definitions</span>
<div style="left:754px;top:777px;width:682px;height:319px;background:#faf9f8;"></div>
<div style="left:754px;top:778px;width:647px;height:318px;overflow:hidden">
<div style="left:118px;top:13px;width:31px;height:32px;background:#d4d4d4;"></div>
<span class="t" style="left:119.0px;top:16.3px;font-size:27px;line-height:27px;color:#111;transform:scaleX(0.9321);">All</span>
<svg style="left:76.5px;top:17.100000000000023px;" width="34" height="22" viewBox="0 0 34 22"><path d="M1 20V1h10l3 4h11v5" fill="none" stroke="#555" stroke-width="1.6"/><path d="M1 20l6-10h25l-5 10z" fill="none" stroke="#555" stroke-width="1.6" stroke-linejoin="miter"/></svg>
<span class="t" style="left:119.0px;top:49.3px;font-size:27px;line-height:27px;color:#111;transform:scaleX(0.9787);">Album</span>
<svg style="left:76.5px;top:50.10000000000002px;" width="30" height="22" viewBox="0 0 30 22"><path d="M1 20V1h11l3.5 4.5H27.5V20z" fill="none" stroke="#555" stroke-width="1.6"/></svg>
<svg style="left:48px;top:55.60000000000002px;" width="8" height="14" viewBox="0 0 8 14"><path d="M0 0l7 7-7 7z" fill="#505050"/></svg>
<span class="t" style="left:119.0px;top:82.3px;font-size:27px;line-height:27px;color:#111;transform:scaleX(0.9838);">Artist</span>
<svg style="left:76.5px;top:83.10000000000002px;" width="30" height="22" viewBox="0 0 30 22"><path d="M1 20V1h11l3.5 4.5H27.5V20z" fill="none" stroke="#555" stroke-width="1.6"/></svg>
<svg style="left:48px;top:88.60000000000002px;" width="8" height="14" viewBox="0 0 8 14"><path d="M0 0l7 7-7 7z" fill="#505050"/></svg>
<span class="t" style="left:119.0px;top:115.3px;font-size:27px;line-height:27px;color:#111;transform:scaleX(0.9893);">Author</span>
<svg style="left:76.5px;top:116.10000000000002px;" width="30" height="22" viewBox="0 0 30 22"><path d="M1 20V1h11l3.5 4.5H27.5V20z" fill="none" stroke="#555" stroke-width="1.6"/></svg>
<svg style="left:48px;top:121.60000000000002px;" width="8" height="14" viewBox="0 0 8 14"><path d="M0 0l7 7-7 7z" fill="#505050"/></svg>
<span class="t" style="left:116.9px;top:148.3px;font-size:27px;line-height:27px;color:#111;transform:scaleX(0.9925);">Broadcast date</span>
<svg style="left:76.5px;top:149.10000000000002px;" width="30" height="22" viewBox="0 0 30 22"><path d="M1 20V1h11l3.5 4.5H27.5V20z" fill="none" stroke="#555" stroke-width="1.6"/></svg>
<svg style="left:48px;top:154.60000000000002px;" width="8" height="14" viewBox="0 0 8 14"><path d="M0 0l7 7-7 7z" fill="#505050"/></svg>
<span class="t" style="left:116.8px;top:181.3px;font-size:27px;line-height:27px;color:#111;transform:scaleX(1.0370);">Button</span>
<svg style="left:76.5px;top:182.10000000000002px;" width="30" height="22" viewBox="0 0 30 22"><path d="M1 20V1h11l3.5 4.5H27.5V20z" fill="none" stroke="#555" stroke-width="1.6"/></svg>
<svg style="left:48px;top:187.60000000000002px;" width="8" height="14" viewBox="0 0 8 14"><path d="M0 0l7 7-7 7z" fill="#505050"/></svg>
<span class="t" style="left:117.7px;top:214.3px;font-size:27px;line-height:27px;color:#111;transform:scaleX(0.9661);">Category</span>
<svg style="left:76.5px;top:215.10000000000002px;" width="30" height="22" viewBox="0 0 30 22"><path d="M1 20V1h11l3.5 4.5H27.5V20z" fill="none" stroke="#555" stroke-width="1.6"/></svg>
<svg style="left:48px;top:220.60000000000002px;" width="8" height="14" viewBox="0 0 8 14"><path d="M0 0l7 7-7 7z" fill="#505050"/></svg>
<span class="t" style="left:117.8px;top:247.3px;font-size:27px;line-height:27px;color:#111;transform:scaleX(0.9048);">Class</span>
<svg style="left:76.5px;top:248.0999999999999px;" width="30" height="22" viewBox="0 0 30 22"><path d="M1 20V1h11l3.5 4.5H27.5V20z" fill="none" stroke="#555" stroke-width="1.6"/></svg>
<svg style="left:48px;top:253.5999999999999px;" width="8" height="14" viewBox="0 0 8 14"><path d="M0 0l7 7-7 7z" fill="#505050"/></svg>
<span class="t" style="left:117.7px;top:280.3px;font-size:27px;line-height:27px;color:#111;transform:scaleX(0.9638);">Composer</span>
<svg style="left:76.5px;top:281.0999999999999px;" width="30" height="22" viewBox="0 0 30 22"><path d="M1 20V1h11l3.5 4.5H27.5V20z" fill="none" stroke="#555" stroke-width="1.6"/></svg>
<svg style="left:48px;top:286.5999999999999px;" width="8" height="14" viewBox="0 0 8 14"><path d="M0 0l7 7-7 7z" fill="#505050"/></svg>
<span class="t" style="left:117.6px;top:313.3px;font-size:27px;line-height:27px;color:#111;transform:scaleX(1.0457);">Creation date</span>
<svg style="left:76.5px;top:314.0999999999999px;" width="30" height="22" viewBox="0 0 30 22"><path d="M1 20V1h11l3.5 4.5H27.5V20z" fill="none" stroke="#555" stroke-width="1.6"/></svg>
<svg style="left:48px;top:319.5999999999999px;" width="8" height="14" viewBox="0 0 8 14"><path d="M0 0l7 7-7 7z" fill="#505050"/></svg>
</div>
<div style="left:1401px;top:778px;width:34px;height:318px;background:#e0e0e0;"></div>
<div style="left:1401px;top:812px;width:2px;height:284px;background:#cacaca;"></div>
<div style="left:1433px;top:812px;width:2px;height:250px;background:#c4c4c4;"></div>
<div style="left:1403px;top:812px;width:30px;height:48px;background:#b8b8b8;"></div>
<svg style="left:1407px;top:788px;" width="23" height="13" viewBox="0 0 23 13"><path d="M0 13L11.5 0 23 13z" fill="#b8b8b8"/></svg>
<svg style="left:1407px;top:1072px;" width="23" height="13" viewBox="0 0 23 13"><path d="M0 0L11.5 13 23 0z" fill="#b8b8b8"/></svg>
<div style="left:1435px;top:209px;width:5px;height:887px;background:#c2c2c2;"></div>
<span class="t" style="left:1474.9px;top:236.2px;font-size:20.6px;line-height:20.6px;color:#222;transform:scaleX(0.8993);">ENTRIES</span>
<svg style="left:1601px;top:224px;" width="40" height="40" viewBox="0 0 40 40"><circle cx="19.5" cy="18.9" r="16.4" fill="none" stroke="#505050" stroke-width="2.4"/><path d="M17.3 8.3h4.4v4h-4.4zM15.1 14.9h6.6v12.5h2.2v2.2h-8.8v-2.2h2.2v-10.3h-2.2z" fill="#505050"/></svg>
<svg style="left:1681px;top:228px;" width="38" height="29" viewBox="0 0 38 29"><path d="M1.2 1.3h14.7l3.3 3h17.7v23.3H1.2z" fill="#1a809e"/><rect x="3.4" y="6.7" width="31" height="18.9" fill="#f3f2f1"/></svg>
<div style="left:1820px;top:223px;width:221px;height:37px;background:#fbfbfb;"></div>
<div style="left:1820px;top:223px;width:221px;height:1px;background:#d0d0d0;"></div>
<span class="t" style="left:1828.1px;top:231.9px;font-size:21.5px;line-height:21.5px;color:#555;transform:scaleX(0.9393);">DigaSQL search</span>
<div style="left:1440px;top:279px;width:601px;height:1px;background:#cfcfcf;"></div>
<div style="left:1440px;top:280px;width:601px;height:677px;background:#fff;"></div>
<span class="t" style="left:1471.6px;top:311.2px;font-size:25px;line-height:25px;color:#444;transform:scaleX(0.9083);font-weight:bold;">Class</span>
<span class="t" style="left:1568.1px;top:311.2px;font-size:25px;line-height:25px;color:#444;transform:scaleX(0.9965);font-weight:bold;">Title</span>
<div style="left:1551px;top:292px;width:1px;height:66px;background:#c8c8c8;"></div>
<div style="left:1456px;top:358px;width:585px;height:45px;background:#d0e3ea;"></div>
<div style="left:1456px;top:358px;width:585px;height:1px;background:#b4bcc0;"></div>
<div style="left:1456px;top:402px;width:585px;height:1px;background:#b4bcc0;"></div>
<svg style="left:1473px;top:366px;" width="34" height="28" viewBox="0 0 34 28"><path d="M1 8.5h7l9-7.5v26l-9-7.5h-7z" fill="#505050"/><path d="M21.5 6a10 10 0 0 1 0 16M25 2.5a15 15 0 0 1 0 23" fill="none" stroke="#505050" stroke-width="1.8"/></svg>
<span class="t" style="left:1570.5px;top:368.4px;font-size:25px;line-height:25px;color:#000080;transform:scaleX(0.8913);">Audio00</span>
<div style="left:1440px;top:957px;width:601px;height:34px;background:#e0e0e0;"></div>
<div style="left:1440px;top:991px;width:601px;height:5px;background:#c0c0c0;"></div>
<svg style="left:1451px;top:963px;" width="12" height="24" viewBox="0 0 12 24"><path d="M12 0v24L0 12z" fill="#b4b4b4"/></svg>
<div style="left:1758px;top:1030px;width:283px;height:18px;background:#fbfbfb;"></div>
<div style="left:1988px;top:1030px;width:40px;height:18px;background:#f3f2f1;"></div>
<svg style="left:1996px;top:1030px;" width="24" height="13" viewBox="0 0 24 13"><path d="M1.5 11.5L12 1.5l10.5 10" fill="none" stroke="#222" stroke-width="2"/></svg>
<div style="left:1440px;top:1066px;width:601px;height:30px;background:#e0e0e0;"></div>
<div style="left:1440px;top:1066px;width:601px;height:1px;background:#cccccc;"></div>
<div style="left:1758px;top:1093px;width:216px;height:2px;background:#c4c4c4;"></div>
<div style="left:2008px;top:1067px;width:33px;height:12px;background:#fff;"></div>
<svg style="left:1451px;top:1069px;" width="12" height="24" viewBox="0 0 12 24"><path d="M12 0v24L0 12z" fill="#b4b4b4"/></svg>
<svg style="left:1985px;top:1069px;" width="12" height="24" viewBox="0 0 12 24"><path d="M0 0v24l12-12z" fill="#b4b4b4"/></svg>
<div style="left:754px;top:1180px;width:1287px;height:42px;background:#dedede;"></div>
<span class="t" style="left:759.1px;top:1194.7px;font-size:20.6px;line-height:20.6px;color:#1a1a1a;transform:scaleX(1.0290);">User: ADMIN</span>
<span class="t" style="left:960.4px;top:1194.7px;font-size:20.6px;line-height:20.6px;color:#1a1a1a;transform:scaleX(0.9816);">DB: LocalDigas</span>
<span class="t" style="left:1186.6px;top:1194.7px;font-size:20.6px;line-height:20.6px;color:#1a1a1a;transform:scaleX(0.9844);">Table: Local Table 00</span>
<span class="t" style="left:1420.0px;top:1194.7px;font-size:20.6px;line-height:20.6px;color:#1a1a1a;transform:scaleX(0.9430);">1 Entries</span>
<span class="t" style="left:1781.2px;top:1194.7px;font-size:20.6px;line-height:20.6px;color:#1a1a1a;transform:scaleX(1.0152);">0 Members</span>
<svg style="left:2028px;top:1204px;" width="13" height="18" viewBox="0 0 13 18"><path d="M9 14h2M5 14h2M9 10h2" stroke="#6a7a9a" stroke-width="2" stroke-dasharray="1.5 1.5"/></svg>
<div style="left:1473px;top:380px;width:286px;height:842px;background:#ebebeb;box-sizing:border-box;border:1px solid #a0a0a0;border-bottom:none;box-shadow:3px 3px 4px rgba(0,0,0,.35);"></div>
<div style="left:1476px;top:848px;width:277px;height:38px;background:#c4c4c4;"></div>
<span class="t" style="left:1517.0px;top:395.8px;font-size:20.7px;line-height:20.7px;color:#1a1a1a;transform:scaleX(0.9623);">Edit...</span>
<span class="t" style="left:1517.0px;top:437.9px;font-size:20.7px;line-height:20.7px;color:#1a1a1a;transform:scaleX(1.0069);">Delete</span>
<span class="t" style="left:1517.0px;top:480.0px;font-size:20.7px;line-height:20.7px;color:#1a1a1a;transform:scaleX(0.9438);">Play</span>
<span class="t" style="left:1517.0px;top:522.1px;font-size:20.7px;line-height:20.7px;color:#1a1a1a;transform:scaleX(0.9926);">Stop</span>
<span class="t" style="left:1517.0px;top:564.2px;font-size:20.7px;line-height:20.7px;color:#a2a2a2;transform:scaleX(1.0049);">Merge entries...</span>
<span class="t" style="left:1517.0px;top:606.3px;font-size:20.7px;line-height:20.7px;color:#1a1a1a;transform:scaleX(0.9786);">Deselect</span>
<span class="t" style="left:1517.0px;top:648.4px;font-size:20.7px;line-height:20.7px;color:#1a1a1a;transform:scaleX(1.0039);">Print</span>
<span class="t" style="left:1517.0px;top:690.5px;font-size:20.7px;line-height:20.7px;color:#1a1a1a;transform:scaleX(1.0301);">Zoom</span>
<span class="t" style="left:1517.0px;top:752.7px;font-size:20.7px;line-height:20.7px;color:#1a1a1a;transform:scaleX(1.0160);">Paste from clipboard</span>
<span class="t" style="left:1517.0px;top:794.8px;font-size:20.7px;line-height:20.7px;color:#a2a2a2;transform:scaleX(0.9944);">Get entry</span>
<span class="t" style="left:1517.0px;top:856.7px;font-size:20.7px;line-height:20.7px;color:#1a1a1a;transform:scaleX(0.9960);">Send to</span>
<span class="t" style="left:1517.0px;top:898.8px;font-size:20.7px;line-height:20.7px;color:#1a1a1a;transform:scaleX(1.0147);">Wrap into Group...</span>
<span class="t" style="left:1517.0px;top:940.9px;font-size:20.7px;line-height:20.7px;color:#a2a2a2;transform:scaleX(1.0185);">Add to Current Group</span>
<span class="t" style="left:1517.0px;top:983.0px;font-size:20.7px;line-height:20.7px;color:#1a1a1a;transform:scaleX(0.9855);">Copy...</span>
<span class="t" style="left:1517.0px;top:1025.1px;font-size:20.7px;line-height:20.7px;color:#1a1a1a;transform:scaleX(0.9702);">Export...</span>
<span class="t" style="left:1517.0px;top:1067.2px;font-size:20.7px;line-height:20.7px;color:#1a1a1a;transform:scaleX(0.9778);">Export as Entry...</span>
<span class="t" style="left:1517.0px;top:1109.3px;font-size:20.7px;line-height:20.7px;color:#1a1a1a;transform:scaleX(1.0001);">Convert audio...</span>
<span class="t" style="left:1517.0px;top:1151.4px;font-size:20.7px;line-height:20.7px;color:#1a1a1a;transform:scaleX(1.0088);">Copy to &quot;Copy Data&quot; list</span>
<span class="t" style="left:1517.0px;top:1193.5px;font-size:20.7px;line-height:20.7px;color:#1a1a1a;transform:scaleX(1.0238);">Copy to clipboard</span>
<span class="t" style="left:1657.4px;top:437.9px;font-size:20.7px;line-height:20.7px;color:#1a1a1a;transform:scaleX(1.0388);">Ctrl+Del</span>
<span class="t" style="left:1676.3px;top:480.0px;font-size:20.7px;line-height:20.7px;color:#1a1a1a;transform:scaleX(1.0162);">Ctrl+P</span>
<svg style="left:1737px;top:693px;" width="9" height="16" viewBox="0 0 9 16"><path d="M0 0l8.5 8L0 16z" fill="#111"/></svg>
<svg style="left:1737px;top:858px;" width="9" height="16" viewBox="0 0 9 16"><path d="M0 0l8.5 8L0 16z" fill="#111"/></svg>
<div style="left:1476px;top:730px;width:279px;height:1px;background:#a0a0a0;"></div>
<div style="left:1476px;top:835px;width:279px;height:1px;background:#a0a0a0;"></div>
<div style="left:1753px;top:843px;width:290px;height:172px;background:#ebebeb;box-sizing:border-box;border:1px solid #a0a0a0;"></div>
<div style="left:1755px;top:970px;width:286px;height:43px;background:#c4c4c4;"></div>
<span class="t" style="left:1795.3px;top:856.7px;font-size:20.7px;line-height:20.7px;color:#1a1a1a;transform:scaleX(1.0533);">OutlookMail</span>
<span class="t" style="left:1795.3px;top:898.8px;font-size:20.7px;line-height:20.7px;color:#1a1a1a;transform:scaleX(0.9653);">FixedFolder</span>
<span class="t" style="left:1795.3px;top:940.9px;font-size:20.7px;line-height:20.7px;color:#1a1a1a;transform:scaleX(1.0069);">FileDialog</span>
<span class="t" style="left:1795.3px;top:983.0px;font-size:20.7px;line-height:20.7px;color:#1a1a1a;transform:scaleX(1.0138);">MyFavouriteAudioEditor</span>
<svg style="left:0px;top:680px;" width="460" height="270" viewBox="0 680 460 270"><rect x="20.3" y="707.65" width="405.2" height="216.6" fill="none" stroke="#26e504" stroke-width="18.2"/></svg>
<svg style="left:1450px;top:810px;" width="591" height="240" viewBox="1450 810 591 240"><rect x="1477.45" y="838.75" width="555.15" height="182.55" fill="none" stroke="#26e504" stroke-width="18.2"/></svg>
</body></html>
